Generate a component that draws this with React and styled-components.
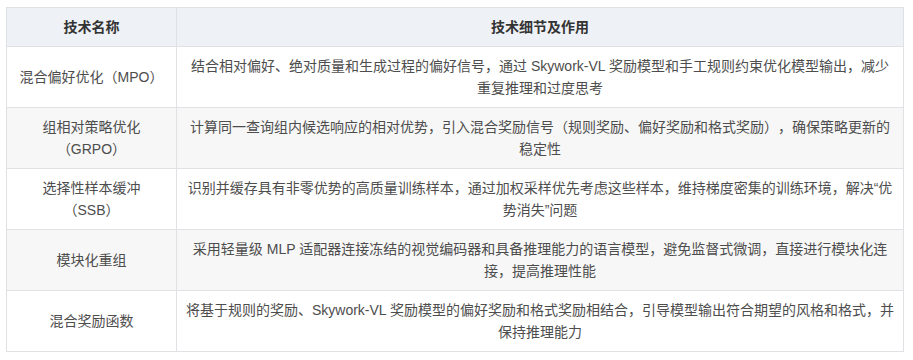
import React from 'react';
import styled, { createGlobalStyle } from 'styled-components';

const GlobalStyle = createGlobalStyle`
  body {
    margin: 0;
    background: #ffffff;
    font-family: "Liberation Sans", "Noto Sans CJK SC", sans-serif;
  }
`;

const rows = [
  {
    name: '混合偏好优化（MPO）',
    detail: '结合相对偏好、绝对质量和生成过程的偏好信号，通过 Skywork-VL 奖励模型和手工规则约束优化模型输出，减少重复推理和过度思考',
  },
  {
    name: '组相对策略优化（GRPO）',
    detail: '计算同一查询组内候选响应的相对优势，引入混合奖励信号（规则奖励、偏好奖励和格式奖励），确保策略更新的稳定性',
  },
  {
    name: '选择性样本缓冲（SSB）',
    detail: '识别并缓存具有非零优势的高质量训练样本，通过加权采样优先考虑这些样本，维持梯度密集的训练环境，解决“优势消失”问题',
  },
  {
    name: '模块化重组',
    detail: '采用轻量级 MLP 适配器连接冻结的视觉编码器和具备推理能力的语言模型，避免监督式微调，直接进行模块化连接，提高推理性能',
  },
  {
    name: '混合奖励函数',
    detail: '将基于规则的奖励、Skywork-VL 奖励模型的偏好奖励和格式奖励相结合，引导模型输出符合期望的风格和格式，并保持推理能力',
  },
];

function App() {
  return (
    <Page>
      <GlobalStyle />
      <Table>
        <colgroup>
          <col style={{ width: 170 }} />
          <col />
        </colgroup>
        <thead>
          <tr>
            <HeadCell>技术名称</HeadCell>
            <HeadCell>技术细节及作用</HeadCell>
          </tr>
        </thead>
        <tbody>
          {rows.map((row, i) => (
            <Row key={row.name} $shaded={i % 2 === 1}>
              <NameCell>{row.name}</NameCell>
              <Cell>{row.detail}</Cell>
            </Row>
          ))}
        </tbody>
      </Table>
    </Page>
  );
}

const Page = styled.div`
  padding: 7px 9px 10px 6px;
`;

const Table = styled.table`
  width: 898px;
  border-collapse: collapse;
  table-layout: fixed;
  font-size: 14px;
  line-height: 22px;
  color: #4d4d4d;
  text-spacing-trim: space-all;
`;

const HeadCell = styled.th`
  background: #eef1f5;
  border: 1px solid #dfe1e4;
  padding: 8px;
  font-weight: bold;
  color: #333333;
  text-align: center;
`;

const Row = styled.tr`
  background: ${(p) => (p.$shaded ? '#f7f7f7' : '#ffffff')};
`;

const Cell = styled.td`
  border: 1px solid #dfe1e4;
  padding: 8px;
  text-align: center;
  vertical-align: middle;
`;

const NameCell = styled(Cell)`
  padding: 8px 10px;
`;

export default App;
